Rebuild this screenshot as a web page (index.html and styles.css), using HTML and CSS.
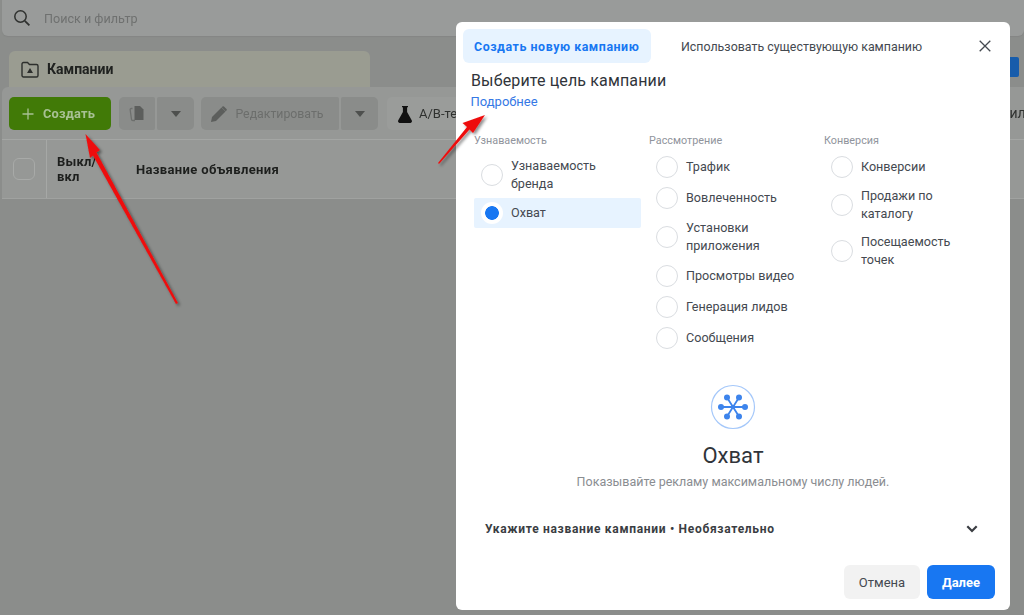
FILE: index.html
```html
<!DOCTYPE html>
<html lang="ru">
<head>
<meta charset="utf-8">
<title>Создать новую кампанию</title>
<link rel="stylesheet" href="styles.css">
</head>
<body>
<div class="page">
  <div class="search">
    <svg class="search-icon" width="18" height="18" viewBox="0 0 18 18"><circle cx="7.500" cy="7.500" r="5.700" fill="none" stroke="#2f312f" stroke-width="1.500"/><path d="M11.800 11.800 16.400 16.400" stroke="#2f312f" stroke-width="1.800" fill="none"/></svg>
    <span>Поиск и фильтр</span>
  </div>
  <div class="tabs">
    <div class="tab">
      <svg width="18" height="17" viewBox="0 0 18 17"><path d="M1 3a1.500 1.500 0 0 1 1.500-1.500h4L8.500 3.500h7A1.500 1.500 0 0 1 17 5v9.500A1.500 1.500 0 0 1 15.500 16h-13A1.500 1.500 0 0 1 1 14.500z" fill="none" stroke="#2d2f2d" stroke-width="1.400"/><path d="M9 7 12 12H6z" fill="#2d2f2d"/></svg>
      <span>Кампании</span>
    </div>
    <div class="tab-blue"></div>
  </div>
  <div class="toolbar">
    <div class="btn create"><svg width="12" height="12" viewBox="0 0 12 12"><path d="M6 .500v11M.500 6h11" stroke="#a8c194" stroke-width="1.300"/></svg><span>Создать</span></div>
    <div class="btn copy">
      <svg width="18" height="18" viewBox="0 0 18 18"><path d="M4.500 3.500H3.200C2.500 3.500 2 4 2.200 5L3.500 14.500c.1.800.6 1 1.300 1H7" fill="none" stroke="#6d6f6d" stroke-width="1.300"/><path d="M6.500 1H12l3.500 3.500V15h-9z" fill="#5c5e5c"/></svg>
    </div>
    <div class="btn caret-btn"><i class="caret"></i></div>
    <div class="btn edit">
      <svg width="16" height="16" viewBox="0 0 16 16"><path d="M0 16l1-5L10.500 1.500l4 4L5 15z" fill="#5c5e5c"/><path d="M11.500.500a1 1 0 0 1 1.400 0l2.600 2.600a1 1 0 0 1 0 1.400l-.800.800-4-4z" fill="#5c5e5c"/></svg>
      <span>Редактировать</span>
    </div>
    <div class="btn caret-btn"><i class="caret"></i></div>
    <div class="btn ab">
      <svg width="14" height="18" viewBox="0 0 14 18"><path d="M4 1h6v1.200h-.9V7l4.600 8.300A1.800 1.800 0 0 1 12.100 18H1.900A1.800 1.800 0 0 1 .3 15.300L4.900 7V2.200H4z" fill="#111"/></svg>
      <span>А/В-тест</span>
    </div>
    <span class="rules">Правил</span>
  </div>
  <div class="thead">
    <div class="th-check"><i class="check"></i></div>
    <div class="th-toggle">Выкл/<br>вкл</div>
    <div class="th-name">Название объявления</div>
  </div>
</div>

<div class="modal">
  <div class="modal-tabs">
    <div class="mtab active">Создать новую кампанию</div>
    <div class="mtab">Использовать существующую кампанию</div>
    <svg class="close" width="12" height="12" viewBox="0 0 12 12"><path d="M.7.700l10.600 10.600M11.300.700.700 11.300" stroke="#444950" stroke-width="1.300" fill="none"/></svg>
  </div>
  <h1 class="title">Выберите цель кампании</h1>
  <a class="more">Подробнее</a>
  <div class="cols">
    <div class="col">
      <div class="col-label">Узнаваемость</div>
      <div class="opt two"><i class="radio"></i><span>Узнаваемость бренда</span></div>
      <div class="opt selected"><i class="radio on"></i><span>Охват</span></div>
    </div>
    <div class="col">
      <div class="col-label">Рассмотрение</div>
      <div class="opt"><i class="radio"></i><span>Трафик</span></div>
      <div class="opt"><i class="radio"></i><span>Вовлеченность</span></div>
      <div class="opt two"><i class="radio"></i><span>Установки приложения</span></div>
      <div class="opt"><i class="radio"></i><span>Просмотры видео</span></div>
      <div class="opt"><i class="radio"></i><span>Генерация лидов</span></div>
      <div class="opt"><i class="radio"></i><span>Сообщения</span></div>
    </div>
    <div class="col">
      <div class="col-label">Конверсия</div>
      <div class="opt"><i class="radio"></i><span>Конверсии</span></div>
      <div class="opt two"><i class="radio"></i><span>Продажи по каталогу</span></div>
      <div class="opt two"><i class="radio"></i><span>Посещаемость точек</span></div>
    </div>
  </div>
  <div class="detail">
    <svg class="reach" width="46" height="46" viewBox="0 0 46 46">
      <circle cx="23" cy="23" r="21.500" fill="#fff" stroke="#a5c8fa" stroke-width="1.200"/>
      <g stroke="#3d84ec" stroke-width="1.800"><path d="M11 23h24M17 13.500l12 19M29 13.500l-12 19"/></g>
      <g fill="#3d84ec"><circle cx="11" cy="23" r="3"/><circle cx="35" cy="23" r="3"/><circle cx="17" cy="13.500" r="3"/><circle cx="29" cy="13.500" r="3"/><circle cx="17" cy="32.500" r="3"/><circle cx="29" cy="32.500" r="3"/><circle cx="23" cy="23" r="2"/></g>
    </svg>
    <div class="detail-title">Охват</div>
    <div class="detail-desc">Показывайте рекламу максимальному числу людей.</div>
  </div>
  <div class="accordion">
    <span>Укажите название кампании • Необязательно</span>
    <svg width="12" height="8" viewBox="0 0 12 8"><path d="M1.300 1.300 6 6l4.700-4.700" fill="none" stroke="#3a3d42" stroke-width="2.200"/></svg>
  </div>
  <div class="actions">
    <div class="mbtn cancel">Отмена</div>
    <div class="mbtn next">Далее</div>
  </div>
</div>

<svg class="arrows" width="1024" height="615" viewBox="0 0 1024 615">
  <defs><filter id="sh" x="-30%" y="-30%" width="160%" height="160%"><feDropShadow dx="2" dy="2" stdDeviation="1.500" flood-color="#000" flood-opacity=".45"/></filter></defs>
  <g fill="#ee1111" filter="url(#sh)">
    <polygon points="85.500,134 100,150 96.500,152.500 178,303 176,304 93,155.500 90,158"/>
    <polygon points="485,115 473,133 469.500,129.500 439,164 438,163 467,127 462.500,123"/>
  </g>
</svg>
</body>
</html>
```
FILE: styles.css
```css
* { box-sizing: border-box; }
html, body { margin: 0; height: 100%; }
body {
  position: relative;
  width: 1024px;
  height: 615px;
  overflow: hidden;
  background: #8b8d8b;
  font-family: Roboto, "Liberation Sans", sans-serif;
  font-size: 13px;
  filter: blur(.45px);
}
.page { display: flex; flex-direction: column; }
.search {
  height: 36px;
  margin-left: 2px;
  padding-left: 11px;
  display: flex;
  align-items: center;
  gap: 13px;
  background: #999b9a;
  border-radius: 0 0 6px 6px;
  color: #6f7170;
  font-size: 12.600px;
  box-shadow: 0 1px 1px #848684;
}
.search-icon { flex: none; }
.tabs { display: flex; height: 36px; margin-top: 15px; }
.tab {
  width: 361px;
  margin-left: 9px;
  padding-left: 12px;
  display: flex;
  align-items: center;
  gap: 8px;
  background: #9a9c91;
  border-radius: 6px 6px 0 0;
  font-size: 14px;
  font-weight: 700;
  color: #202220;
}
.tab-blue {
  width: 9px;
  height: 20px;
  margin: 6px 0 0 640px;
  background: #175cab;
  border-radius: 0 2px 2px 0;
}
.toolbar {
  height: 53px;
  margin-left: 2px;
  padding: 10px 0 0 7px;
  display: flex;
  align-items: flex-start;
  background: #969896;
  border-radius: 6px 0 0 0;
  border-bottom: 1px solid #a4a6a4;
  white-space: nowrap;
}
.btn {
  height: 33px;
  display: flex;
  align-items: center;
  justify-content: center;
  border-radius: 5px;
  background: #8a8c8a;
  color: #6c6e6c;
  flex: none;
}
.create {
  width: 102px;
  gap: 9px;
  padding-right: 3px;
  background: #417a07;
  color: #a8c194;
  font-weight: 700;
  font-size: 12.800px;
  letter-spacing: .2px;
}
.copy { width: 36px; margin-left: 8px; border-radius: 5px 2px 2px 5px; }
.caret-btn { width: 37px; margin-left: 2px; border-radius: 2px 5px 5px 2px; }
.caret {
  width: 0;
  height: 0;
  border-left: 5px solid transparent;
  border-right: 5px solid transparent;
  border-top: 6px solid #4e504e;
}
.edit {
  width: 138px;
  margin-left: 7px;
  gap: 8px;
  padding-right: 5px;
  font-size: 12.300px;
  border-radius: 5px 2px 2px 5px;
}
.ab {
  width: 100px;
  margin-left: 9px;
  padding-left: 11px;
  justify-content: flex-start;
  gap: 7px;
  background: #9a9c9a;
  color: #2f312f;
}
.rules { margin: 8px 0 0 489px; color: #2f312f; font-size: 14px; }
.thead {
  height: 59px;
  margin-left: 2px;
  display: flex;
  align-items: center;
  background: #969896;
  border-bottom: 1px solid #a0a2a0;
  color: #1d1f1d;
  font-weight: 700;
}
.th-check {
  width: 45px;
  height: 100%;
  padding-left: 11px;
  display: flex;
  align-items: center;
  border-right: 1px solid #a6a8a6;
}
.check {
  width: 22px;
  height: 22px;
  border: 1px solid #a8aaa8;
  border-radius: 6px;
}
.th-toggle { width: 89px; padding-left: 10px; line-height: 15px; letter-spacing: .2px; }
.th-name { letter-spacing: .35px; }

.modal {
  position: absolute;
  left: 456px;
  top: 22px;
  width: 554px;
  height: 588px;
  padding: 7px 15px 0 7px;
  display: flex;
  flex-direction: column;
  background: #fff;
  border-radius: 6px;
  color: #1c1e21;
}
.modal-tabs { display: flex; align-items: center; height: 34px; flex: none; }
.mtab { height: 34px; padding: 0 11px; display: flex; align-items: center; color: #444950; font-size: 12.400px; white-space: nowrap; }
.mtab.active {
  width: 188px;
  background: #e7f3ff;
  border-radius: 6px;
  color: #1877f2;
  font-weight: 700;
  letter-spacing: .55px;
}
.mtab + .mtab { margin-left: 19px; }
.close { margin-left: auto; margin-right: 4px; flex: none; }
.title {
  margin: 8px 0 0 8px;
  font-size: 16px;
  line-height: 20px;
  font-weight: 400;
  letter-spacing: .14px;
  color: #30343a;
}
.more { margin: 1px 0 0 7.500px; line-height: 20px; color: #3578e5; font-size: 13px; }
.cols { display: flex; margin: 22px 0 0 11px; }
.col { width: 175px; flex: none; }
.col-label { height: 17px; font-size: 10.800px; line-height: 14px; color: #90949c; }
.opt {
  width: 167px;
  min-height: 31px;
  padding-left: 7px;
  display: flex;
  align-items: center;
  gap: 8px;
  color: #444950;
  font-size: 12.600px;
  line-height: 18px;
}
.opt.two { height: 47px; }
.col:last-child .opt.two { height: 46px; }
.opt.selected { height: 30px; min-height: 30px; background: #e7f3ff; border-radius: 2px; }
.opt span { width: 125px; }
.radio {
  width: 22px;
  height: 22px;
  flex: none;
  display: block;
  background: #fff;
  border: 1px solid #dadde1;
  border-radius: 50%;
}
.radio.on {
  border: 0;
  background: radial-gradient(circle, #1877f2 0 6.500px, #fff 7.200px);
}
.detail {
  position: absolute;
  top: 362px;
  left: 0;
  right: 0;
  display: flex;
  flex-direction: column;
  align-items: center;
}
.detail-title { margin-top: 12px; font-size: 22px; line-height: 28px; color: #30343a; }
.detail-desc { margin-top: 3px; color: #8a8d91; font-size: 12.500px; line-height: 18px; }
.accordion {
  position: absolute;
  left: 29px;
  right: 32px;
  top: 498px;
  height: 18px;
  display: flex;
  align-items: center;
  justify-content: space-between;
  font-size: 12px;
  font-weight: 700;
  color: #3a3d42;
  letter-spacing: .69px;
}
.actions {
  position: absolute;
  right: 15px;
  bottom: 11px;
  display: flex;
  gap: 7px;
}
.mbtn { height: 34px; display: flex; align-items: center; justify-content: center; border-radius: 6px; }
.cancel { width: 76px; background: #f2f2f2; color: #444950; }
.next { width: 68px; background: #1877f2; color: #fff; font-weight: 700; }
.arrows { position: absolute; left: 0; top: 0; pointer-events: none; }
```
